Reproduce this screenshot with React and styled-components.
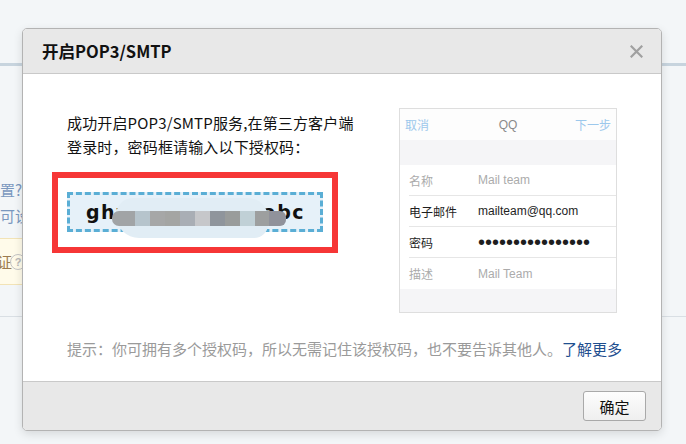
import styled, { createGlobalStyle } from 'styled-components';

const GlobalStyle = createGlobalStyle`
  html, body {
    margin: 0;
    padding: 0;
    background: #f3f6f8;
  }
  body {
    font-family: "Noto Sans CJK SC", "Liberation Sans", sans-serif;
  }
  * {
    box-sizing: border-box;
  }
`;

const mosaic = [
    { w: 23, c: '#a1a4a6' },
    { w: 15, c: '#b6c4cc' },
    { w: 15, c: '#a6a7a7' },
    { w: 15, c: '#a4a5a3' },
    { w: 15, c: '#a9aeb5' },
    { w: 15, c: '#c6c7ca' },
    { w: 15, c: '#8f959c' },
    { w: 15, c: '#999c9b' },
    { w: 15, c: '#c0d0d6' },
    { w: 14, c: '#9d9f9f' },
    { w: 17, c: '#90929b' },
];

const phoneRows = [
    { label: '名称', value: 'Mail team', muted: true },
    { label: '电子邮件', value: 'mailteam@qq.com' },
    { label: '密码', value: '••••••••••••••••', dots: true },
    { label: '描述', value: 'Mail Team', muted: true },
];

const App = () => {
    return (
        <Screen>
            <GlobalStyle />
            <TopBar />
            <Side>
                <PageLink>如何设置?</PageLink>
                <PageLink>您同样可设置</PageLink>
                <Notice>
                    开启验证
                    <HelpIcon>?</HelpIcon>
                </Notice>
            </Side>
            <Rule />

            <Dialog>
                <Header>
                    <Title>开启POP3/SMTP</Title>
                    <Close aria-label="关闭">
                        <svg width="13" height="13" viewBox="0 0 13 13">
                            <path d="M1.5 1.5 L11.5 11.5 M11.5 1.5 L1.5 11.5" stroke="#a0a0a0" strokeWidth="2.2" strokeLinecap="square" />
                        </svg>
                    </Close>
                </Header>

                <Body>
                    <TopRow>
                        <LeftCol>
                            <Intro>
                                成功开启POP3/SMTP服务,在第三方客户端
                                <br />
                                登录时，密码框请输入以下授权码：
                            </Intro>
                            <RedFrame>
                                <CodeBox>
                                    <span>ghv</span>
                                    <span>abc</span>
                                    <Mosaic>
                                        <Cloud />
                                        <Blocks>
                                            {mosaic.map((b, i) => (
                                                <Block key={i} $c={b.c} style={{ width: b.w }} />
                                            ))}
                                        </Blocks>
                                    </Mosaic>
                                </CodeBox>
                            </RedFrame>
                        </LeftCol>

                        <Phone>
                            <PhoneHeader>
                                <PhoneAction>取消</PhoneAction>
                                <PhoneTitle>QQ</PhoneTitle>
                                <PhoneAction $right>下一步</PhoneAction>
                            </PhoneHeader>
                            <PhoneBand />
                            {phoneRows.map((r, i) => (
                                <PhoneRow key={r.label} $last={i === phoneRows.length - 1}>
                                    <PhoneLabel $muted={r.muted}>{r.label}</PhoneLabel>
                                    <PhoneValue $muted={r.muted} $dots={r.dots}>{r.value}</PhoneValue>
                                </PhoneRow>
                            ))}
                            <PhoneBand $grow />
                        </Phone>
                    </TopRow>

                    <Hint>
                        提示：你可拥有多个授权码，所以无需记住该授权码，也不要告诉其他人。<MoreLink>了解更多</MoreLink>
                    </Hint>
                </Body>

                <Footer>
                    <OkButton>确定</OkButton>
                </Footer>
            </Dialog>
        </Screen>
    )
}

const Screen = styled.div`
    position: relative;
    width: 686px;
    height: 444px;
    overflow: hidden;
    background: #f3f6f8;
`;

const TopBar = styled.div`
    height: 66px;
    border-bottom: 3px solid #c7d4de;
`;

const Side = styled.div`
    margin-left: -45px;
    padding-top: 111px;
    width: 320px;
`;

const PageLink = styled.div`
    font-size: 15px;
    line-height: 26px;
    color: #7a98bf;
    white-space: nowrap;
`;

const Notice = styled.div`
    margin-top: 9px;
    height: 47px;
    display: flex;
    align-items: center;
    gap: 1px;
    padding-left: 0;
    text-indent: -4px;
    background: #fffbea;
    border: 1px solid #f2e3b6;
    color: #9b7b50;
    font-size: 15px;
    white-space: nowrap;
`;

const HelpIcon = styled.span`
    width: 16px;
    height: 16px;
    margin-left: -3px;
    text-indent: 0;
    border-radius: 50%;
    border: 1.5px solid #c4c4c4;
    color: #b8b8b8;
    font-size: 11px;
    font-weight: bold;
    display: inline-flex;
    align-items: center;
    justify-content: center;
    font-family: "Liberation Sans", sans-serif;
`;

const Rule = styled.div`
    margin-top: 31px;
    border-top: 1px solid #d9dfe4;
`;

const Dialog = styled.div`
    position: absolute;
    left: 22px;
    top: 28px;
    width: 640px;
    height: 403px;
    display: flex;
    flex-direction: column;
    background: #fff;
    border: 1px solid #b3b3b3;
    border-radius: 5px;
    box-shadow: 0 3px 10px rgba(0, 0, 0, 0.12);
    overflow: hidden;
`;

const Header = styled.div`
    height: 45px;
    flex-shrink: 0;
    display: flex;
    align-items: center;
    justify-content: space-between;
    padding-left: 19px;
    background: #e8e8e8;
    border-bottom: 1px solid #c9c9c9;
`;

const Title = styled.h3`
    margin: 0;
    font-size: 16.5px;
    font-weight: bold;
    color: #111;
`;

const Close = styled.button`
    width: 20px;
    height: 20px;
    margin-right: 15px;
    padding: 0;
    border: none;
    background: transparent;
    display: flex;
    align-items: center;
    justify-content: center;
    cursor: pointer;
`;

const Body = styled.div`
    flex: 1;
    padding: 34px 0 0 29px;
`;

const TopRow = styled.div`
    display: flex;
    align-items: flex-start;
`;

const LeftCol = styled.div`
    width: 286px;
    padding-top: 3px;
`;

const Intro = styled.p`
    margin: 0;
    padding-left: 15px;
    font-size: 15px;
    line-height: 24px;
    letter-spacing: 0.15px;
    color: #111;
    white-space: nowrap;
`;

const RedFrame = styled.div`
    margin-top: 13px;
    width: 286px;
    height: 81px;
    border: 6px solid #f63636;
    padding: 14px 9px 15px;
`;

const CodeBox = styled.div`
    position: relative;
    height: 40px;
    display: flex;
    align-items: center;
    justify-content: space-between;
    padding: 0 15px 0 16px;
    border: 3px dashed #5aaed5;
    background: #e6f1f9;
    font-family: "DejaVu Sans", sans-serif;
    font-size: 19px;
    font-weight: bold;
    letter-spacing: 1.5px;
    color: #111;
`;

const Mosaic = styled.div`
    position: absolute;
    left: 42px;
    top: 3px;
    width: 190px;
    height: 40px;
`;

const Cloud = styled.div`
    position: absolute;
    left: 4px;
    top: 0;
    width: 152px;
    height: 40px;
    background: #e1edf5;
    border-radius: 22px 26px 18px 30px;
`;

const Blocks = styled.div`
    position: absolute;
    left: 0;
    top: 13px;
    height: 15px;
    display: flex;
    border-radius: 7px 6px 6px 7px;
    overflow: hidden;
`;

const Block = styled.div`
    flex-shrink: 0;
    height: 15px;
    background: ${p => p.$c};
`;

const Phone = styled.div`
    margin-left: 61px;
    width: 218px;
    height: 205px;
    display: flex;
    flex-direction: column;
    border: 1px solid #dedede;
    background: #fff;
    font-family: "Liberation Sans", "Noto Sans CJK SC", sans-serif;
    font-size: 12px;
`;

const PhoneHeader = styled.div`
    height: 31px;
    display: grid;
    grid-template-columns: 1fr auto 1fr;
    align-items: center;
    padding: 0 5px;
    background: #fdfdfd;
`;

const PhoneAction = styled.span`
    color: #9cc8ec;
    text-align: ${p => (p.$right ? 'right' : 'left')};
`;

const PhoneTitle = styled.span`
    color: #8a8a8a;
`;

const PhoneBand = styled.div`
    height: 25px;
    background: #f5f5f7;
    flex: ${p => (p.$grow ? 1 : 'none')};
`;

const PhoneRow = styled.div`
    height: 31px;
    margin-left: 9px;
    display: flex;
    align-items: center;
    border-bottom: ${p => (p.$last ? 'none' : '1px solid #e6e6e6')};
`;

const PhoneLabel = styled.span`
    width: 69px;
    color: ${p => (p.$muted ? '#ababab' : '#1e1e1e')};
`;

const PhoneValue = styled.span`
    color: ${p => (p.$muted ? '#ababab' : '#1e1e1e')};
    font-size: ${p => (p.$dots ? '20px' : '12px')};
    line-height: 1;
`;

const Hint = styled.p`
    margin: 24px 0 0;
    padding-left: 15px;
    font-size: 15px;
    line-height: 24px;
    color: #9a9a9a;
    white-space: nowrap;
`;

const MoreLink = styled.a`
    color: #1f4f8f;
    text-decoration: none;
    cursor: pointer;
`;

const Footer = styled.div`
    height: 49px;
    flex-shrink: 0;
    display: flex;
    justify-content: flex-end;
    align-items: flex-start;
    padding: 9px 15px 0 0;
    background: #e8e8e8;
    border-top: 1px solid #c9c9c9;
`;

const OkButton = styled.button`
    width: 63px;
    height: 30px;
    border: 1px solid #a9a9a9;
    border-radius: 3px;
    background: linear-gradient(#fdfdfd, #efefef);
    font-family: "Noto Sans CJK SC", sans-serif;
    font-size: 15px;
    color: #111;
    cursor: pointer;
`;

export default App;
